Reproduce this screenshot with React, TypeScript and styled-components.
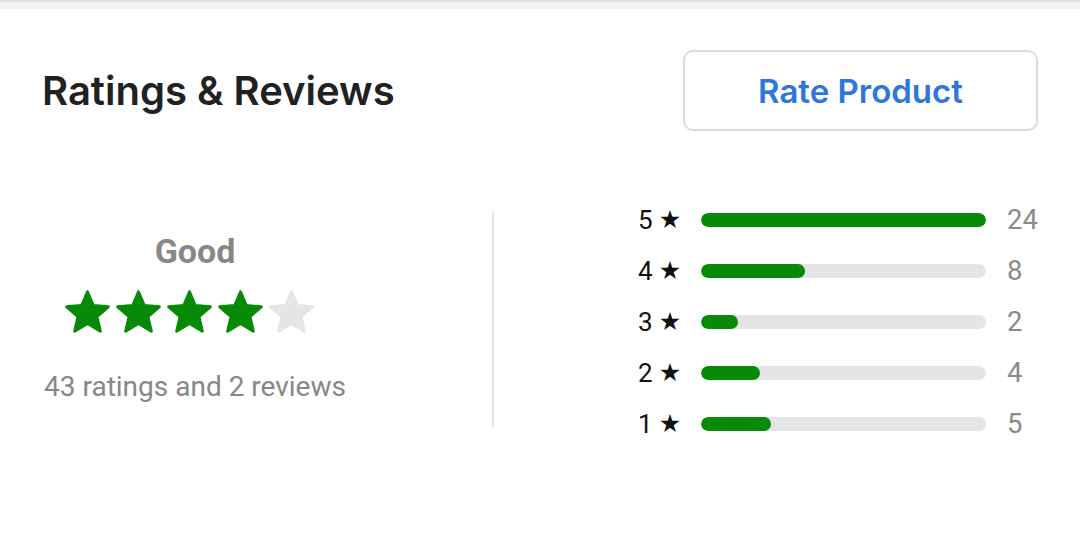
import styled, { createGlobalStyle } from "styled-components";

const GlobalStyle = createGlobalStyle`
  html, body {
    margin: 0;
    padding: 0;
    background: #ffffff;
  }
  body {
    font-family: Roboto, "Noto Sans", sans-serif;
  }
`;

const GREEN = "#078a07";
const TRACK = "#e5e5e5";

const Styled_Page = styled.div`
  width: 1080px;
  height: 534px;
  background: #ffffff;
`;

const Styled_TopStrip = styled.div`
  height: 9px;
  background: #f0f2f2;
  border-top: 2px solid #dfe2e5;
  box-sizing: border-box;
`;

const Styled_Content = styled.div`
  padding: 41px 42px 0 42px;
`;

const Styled_Header = styled.header`
  display: flex;
  align-items: center;
  justify-content: space-between;
`;

const Styled_Title = styled.h2`
  margin: 0;
  font-family: Inter, "Noto Sans", sans-serif;
  font-weight: 600;
  font-size: 40px;
  color: #212121;
`;

const Styled_RateButton = styled.button`
  width: 355px;
  height: 81px;
  box-sizing: border-box;
  border: 2px solid #dcdcdc;
  border-radius: 10px;
  background: #ffffff;
  color: #2f76db;
  font-family: Inter, "Noto Sans", sans-serif;
  font-weight: 600;
  font-size: 33px;
  cursor: pointer;
`;

const Styled_Body = styled.section`
  margin-top: 69px;
  display: flex;
  align-items: center;
  justify-content: space-between;
`;

const Styled_Summary = styled.div`
  width: 306px;
  display: flex;
  flex-direction: column;
  align-items: center;
`;

const Styled_Verdict = styled.div`
  font-family: Roboto, sans-serif;
  font-weight: 700;
  font-size: 34px;
  color: #878787;
  line-height: 40px;
`;

const Styled_Stars = styled.div`
  display: flex;
  gap: 6px;
  margin-top: 19px;
  margin-right: 11px;
`;

const Styled_Caption = styled.div`
  margin-top: 37px;
  padding-bottom: 5px;
  font-family: Roboto, sans-serif;
  font-size: 28px;
  line-height: 33px;
  color: #878787;
`;

const Styled_Divider = styled.div`
  width: 2px;
  height: 217px;
  background: #e6e6e6;
`;

const Styled_Breakdown = styled.div`
  width: 400px;
  padding-top: 5px;
  display: grid;
  grid-template-columns: 42px 1fr 31px;
  grid-auto-rows: 30px;
  column-gap: 21px;
  row-gap: 21px;
  align-items: center;
`;

const Styled_Label = styled.div`
  display: flex;
  align-items: center;
  height: 30px;
  font-family: Roboto, sans-serif;
  font-size: 26px;
  color: #111111;
  white-space: nowrap;
`;

const Styled_StarGlyph = styled.span`
  font-family: "DejaVu Sans", sans-serif;
  font-size: 25px;
  line-height: 30px;
  margin-left: 6px;
`;

const Styled_Track = styled.div`
  height: 14px;
  border-radius: 7px;
  background: ${TRACK};
  overflow: hidden;
`;

const Styled_Fill = styled.div`
  height: 100%;
  border-radius: 7px;
  background: ${GREEN};
`;

const Styled_Count = styled.div`
  font-family: Roboto, sans-serif;
  font-size: 27.5px;
  color: #8a8a8a;
  line-height: 30px;
`;

interface StarProps {
  filled: boolean;
}

function Star({ filled }: StarProps): JSX.Element {
  const color = filled ? GREEN : TRACK;
  return (
    <svg width="45" height="43" viewBox="1.2 1.2 21.6 20.6">
      <path
        d="M12 17.27L18.18 21l-1.64-7.03L22 9.24l-7.19-.61L12 2 9.19 8.63 2 9.24l5.46 4.73L5.82 21z"
        fill={color}
        stroke={color}
        strokeWidth="1.4"
        strokeLinejoin="round"
      />
    </svg>
  );
}

const rows = [
  { stars: 5, count: 24 },
  { stars: 4, count: 8 },
  { stars: 3, count: 2 },
  { stars: 2, count: 4 },
  { stars: 1, count: 5 }
];

export default function App(): JSX.Element {
  const max = Math.max(...rows.map((r) => r.count));

  return (
    <Styled_Page>
      <GlobalStyle />
      <Styled_TopStrip />
      <Styled_Content>
        <Styled_Header>
          <Styled_Title>Ratings &amp; Reviews</Styled_Title>
          <Styled_RateButton>Rate Product</Styled_RateButton>
        </Styled_Header>

        <Styled_Body>
          <Styled_Summary>
            <Styled_Verdict>Good</Styled_Verdict>
            <Styled_Stars>
              {[1, 2, 3, 4, 5].map((i) => (
                <Star key={i} filled={i <= 4} />
              ))}
            </Styled_Stars>
            <Styled_Caption>43 ratings and 2 reviews</Styled_Caption>
          </Styled_Summary>

          <Styled_Divider />

          <Styled_Breakdown>
            {rows.map((row) => (
              <>
                <Styled_Label key={`l${row.stars}`}>
                  {row.stars}
                  <Styled_StarGlyph>★</Styled_StarGlyph>
                </Styled_Label>
                <Styled_Track key={`t${row.stars}`}>
                  <Styled_Fill style={{ width: `calc(14px + (100% - 14px) * ${row.count / max})` }} />
                </Styled_Track>
                <Styled_Count key={`c${row.stars}`}>{row.count}</Styled_Count>
              </>
            ))}
          </Styled_Breakdown>
        </Styled_Body>
      </Styled_Content>
    </Styled_Page>
  );
}
